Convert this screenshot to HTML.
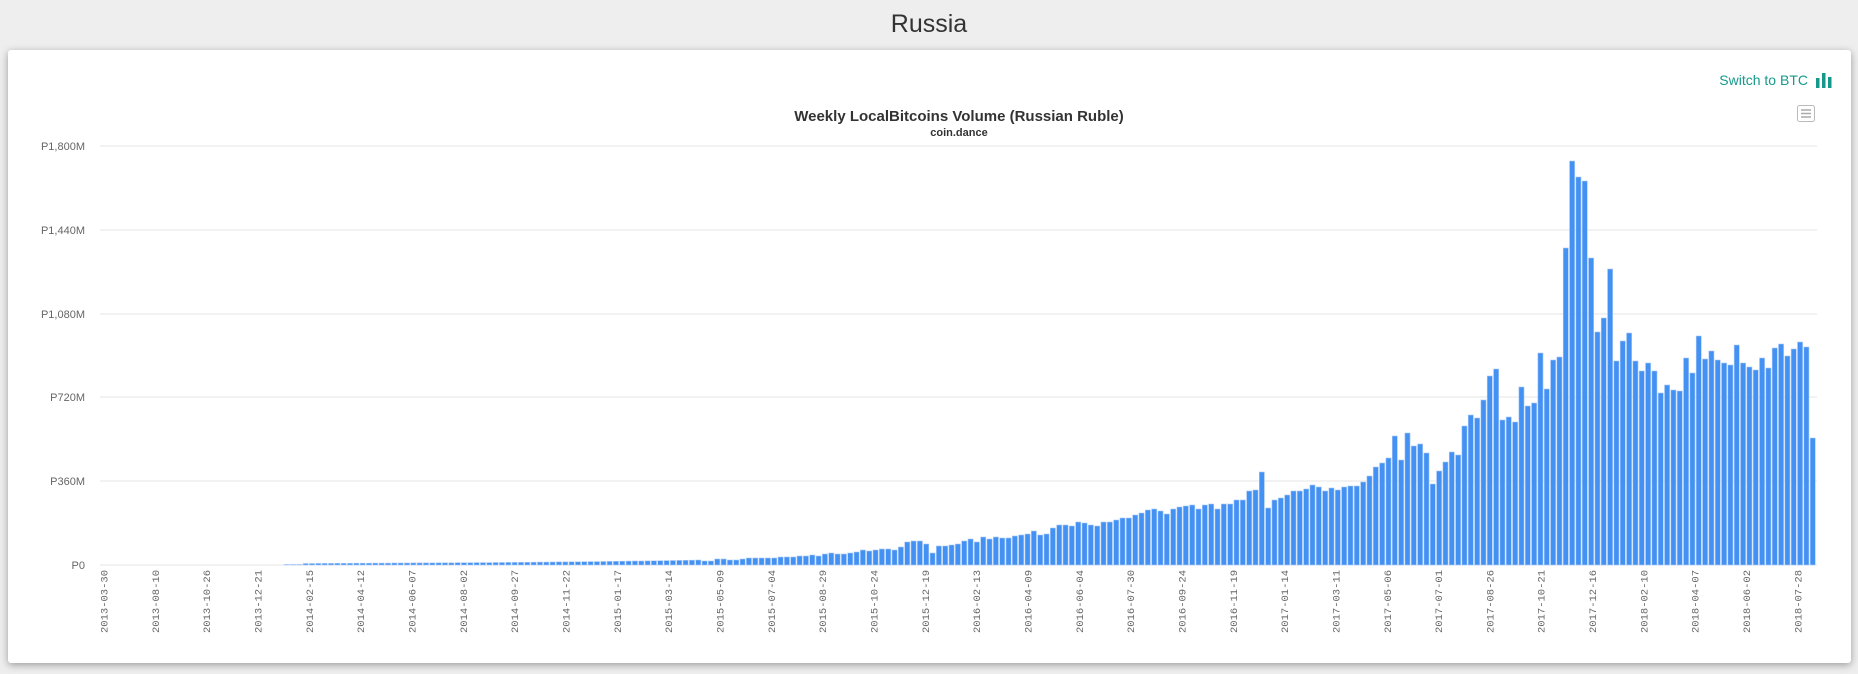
<!DOCTYPE html>
<html><head><meta charset="utf-8"><style>
html,body{margin:0;padding:0;background:#eeeeee;width:1858px;height:674px;overflow:hidden;font-family:"Liberation Sans",Arial,sans-serif}
h1{position:absolute;left:0;width:1858px;top:10px;margin:0;text-align:center;font-weight:normal;font-size:25px;color:#333}
.card{position:absolute;left:8px;top:50px;width:1843px;height:613px;background:#fff;border-radius:3px;box-shadow:0 2px 8px rgba(0,0,0,.35)}
.sw{position:absolute;right:50px;top:72px;font-size:14px;color:#16998a}
svg{position:absolute;left:0;top:0}
</style></head><body>
<h1>Russia</h1>
<div class="card"></div>
<div class="sw">Switch to BTC</div>
<svg width="1858" height="674" id="s" xmlns="http://www.w3.org/2000/svg">
<rect x="1816" y="78" width="3.5" height="10" fill="#16998a"/><rect x="1822" y="73" width="3.5" height="15" fill="#16998a"/><rect x="1828" y="77" width="3.5" height="11" fill="#16998a"/>
<rect x="1797.5" y="105.5" width="17" height="16" rx="2" fill="#fff" stroke="#bbb"/>
<path d="M1801 110h10M1801 113.5h10M1801 117h10" stroke="#aaa" stroke-width="1.5"/>
<text x="959" y="121" text-anchor="middle" font-size="15" font-weight="bold" fill="#333" font-family="Liberation Sans, sans-serif">Weekly LocalBitcoins Volume (Russian Ruble)</text>
<text x="959" y="136" text-anchor="middle" font-size="11" font-weight="bold" fill="#333" font-family="Liberation Sans, sans-serif">coin.dance</text>
<g id="g"></g>
</svg>
<script>
var g=document.getElementById('g'),h='';
var ys=[146,230,314,397,481,565],yl=['P1,800M','P1,440M','P1,080M','P720M','P360M','P0'];
for(var i=0;i<6;i++){h+='<line x1="100" x2="1817" y1="'+ys[i]+'" y2="'+ys[i]+'" stroke="#e6e6e6"/>';
h+='<text x="85" y="'+(ys[i]+4)+'" text-anchor="end" font-size="11" fill="#666" font-family="Liberation Sans, sans-serif">'+yl[i]+'</text>';}
var a=[];
for(var i=0;i<94;i++){var x=100+6.33*i;var v=x<280?0:x<300?0.6:x<500?1.5+ (x-300)/200:x<600?2.5+(x-500)/100:3.5+(x-600)/70;a.push(v);}
a=a.concat([5,4,4,6,6,5,5,6,7,7,7,7,7,8,8,8,9,9,10,9,11,12,11,11,12,13,15,14,15,16,16,15,18,23,24,24,21,12,19,19,20,21,24,26,23,28,26,28,27,27,29,30,31,34,30,31,37,40,40,39,43,42,40,39,43,43,45,47,47,50,52,55,56,54,51,56,58]);
a=a.concat([59,60,56,60,61,56,61,61,65,65,74,75,93,57,65,67,70,74,74,76,80,78,74,77,75,78,79,79,83,89,98,102,107,129,105,132,119,121,112,81,94,103,113,110,139,150,147,165,189,196]);
a=a.concat([145,148,143,178,159,162,212,176,205,208,317,404,388,384,307,233,247,296,204,224,232,204,194,202,194,172,180,175,174,207,192,229,206,214,205,202,200,220,202,198,195,207,197,217,221,209,216,223,218,127]);
var n=a.length,p=(1816-100)/n;
for(var i=0;i<n;i++){var v=a[i];if(v<=0)continue;var x=100+p*i+0.5;
h+='<rect x="'+x.toFixed(2)+'" y="'+(565-v).toFixed(1)+'" width="'+(p-1.2).toFixed(2)+'" height="'+v.toFixed(1)+'" fill="#4391f2" stroke="#a9c9f8" stroke-width="0.6"/>';}
var L=['2013-03-30','2013-08-10','2013-10-26','2013-12-21','2014-02-15','2014-04-12','2014-06-07','2014-08-02','2014-09-27','2014-11-22','2015-01-17','2015-03-14','2015-05-09','2015-07-04','2015-08-29','2015-10-24','2015-12-19','2016-02-13','2016-04-09','2016-06-04','2016-07-30','2016-09-24','2016-11-19','2017-01-14','2017-03-11','2017-05-06','2017-07-01','2017-08-26','2017-10-21','2017-12-16','2018-02-10','2018-04-07','2018-06-02','2018-07-28'];
for(var i=0;i<L.length;i++){var x=104+i*51.33+3.5;
h+='<text transform="translate('+x.toFixed(1)+',570) rotate(-90)" text-anchor="end" font-size="10.5" fill="#666" font-family="Liberation Mono, monospace">'+L[i]+'</text>';}
g.innerHTML=h;
</script>
</body></html>
